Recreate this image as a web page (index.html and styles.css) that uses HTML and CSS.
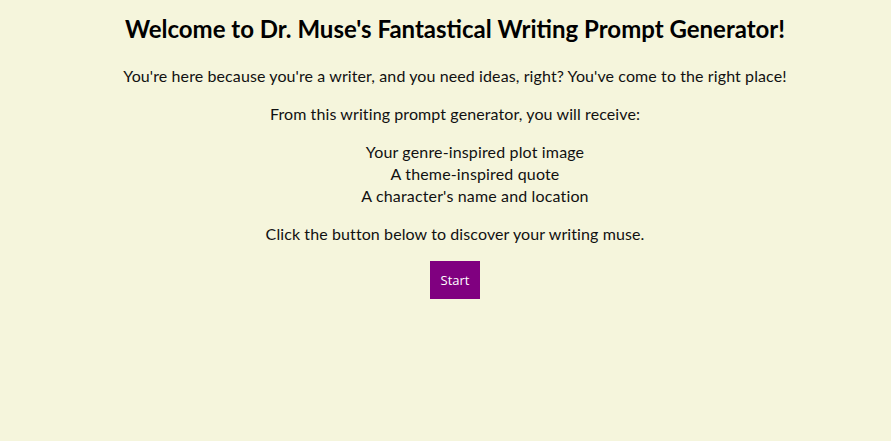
FILE: index.html
```html
<!DOCTYPE html>
<html lang="en">
<head>
<meta charset="utf-8">
<title>Dr. Muse's Fantastical Writing Prompt Generator</title>
<link rel="stylesheet" href="styles.css">
</head>
<body>
<main class="intro">
  <h1 class="title">Welcome to Dr. Muse's Fantastical Writing Prompt Generator!</h1>
  <p class="text">You're here because you're a writer, and you need ideas, right? You've come to the right place!</p>
  <p class="text">From this writing prompt generator, you will receive:</p>
  <ul class="list">
    <li>Your genre-inspired plot image</li>
    <li>A theme-inspired quote</li>
    <li>A character's name and location</li>
  </ul>
  <p class="text">Click the button below to discover your writing muse.</p>
  <button class="start" type="button">Start</button>
</main>
</body>
</html>
```

FILE: styles.css
```css
html, body {
  background: #f5f5dc;
}
body {
  margin: 0;
  padding: 12px 8px 0 27px;
  font-family: "Lato", "Open Sans", sans-serif;
  color: #111;
}
.intro {
  display: flex;
  flex-direction: column;
  align-items: center;
  text-align: center;
}
.title {
  margin: 0 0 20px;
  font-size: 24px;
  line-height: 33px;
  font-weight: 700;
  color: #000;
}
.text {
  margin: 0 0 16px;
  font-size: 16px;
  line-height: 22px;
  letter-spacing: 0.1px;
}
.list {
  list-style: none;
  margin: 0 0 16px;
  padding: 0 0 0 40px;
  font-size: 16px;
  line-height: 22px;
  letter-spacing: 0.15px;
}
.start {
  width: 50px;
  height: 38px;
  border: none;
  background: #800080;
  color: #fff;
  font-family: "Open Sans", sans-serif;
  font-size: 13px;
  padding: 0;
}
```
